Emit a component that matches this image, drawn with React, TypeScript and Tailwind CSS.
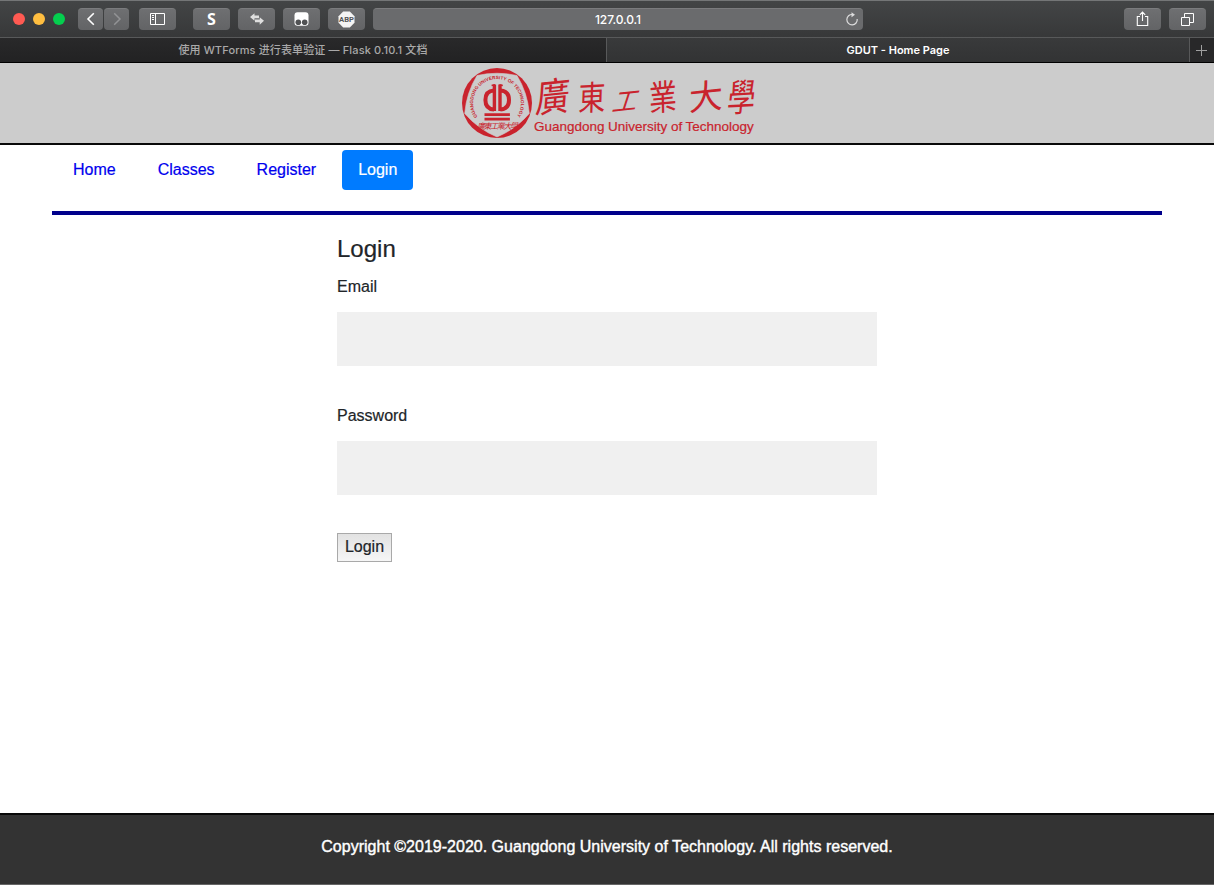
import type { ReactNode } from "react";

const toolButton =
  "flex h-[22px] shrink-0 items-center justify-center rounded-[4px] bg-linear-to-b from-[#6e6f71] to-[#636466] border-t border-[#7b7c7e] text-white";

function ToolButton({ className, children }: { className: string; children: ReactNode }) {
  return <button className={`${toolButton} ${className}`}>{children}</button>;
}

function Toolbar() {
  return (
    <div className="flex h-[37px] items-center border-t border-[#747677] bg-linear-to-b from-[#434546] to-[#373839] pl-[13px] pr-2 pb-px">
      <span className="size-3 rounded-full bg-[#ff5a52]" />
      <span className="ml-2 size-3 rounded-full bg-[#ffbe40]" />
      <span className="ml-2 size-3 rounded-full bg-[#04ce4e]" />
      <ToolButton className="ml-[13px] w-[25px]">
        <svg width="10" height="14" viewBox="0 0 10 14" fill="none" stroke="currentColor" strokeWidth="1.6">
          <path d="M7.8 1.2 2 7l5.8 5.8" />
        </svg>
      </ToolButton>
      <ToolButton className="ml-px w-[25px]">
        <svg width="10" height="14" viewBox="0 0 10 14" fill="none" stroke="#929395" strokeWidth="1.5">
          <path d="M2.2 1.2 8 7l-5.8 5.8" />
        </svg>
      </ToolButton>
      <ToolButton className="ml-2.5 w-[37px]">
        <svg width="15" height="12" viewBox="0 0 15 12" fill="none" stroke="currentColor">
          <path d="M.5.5h14v11H.5zM5.5.5v11M2 2.5h2M2 4.5h2M2 6.5h2" />
        </svg>
      </ToolButton>
      <ToolButton className="ml-[17px] w-[37px] font-['Open_Sans',sans-serif] text-[16px] font-bold leading-none">S</ToolButton>
      <ToolButton className="ml-2 w-[37px]">
        <svg width="14" height="12" viewBox="0 0 14 12" fill="#dfdfdf">
          <path d="M0 4 4.5.3v2.3H9v2.7H4.5v2.4zM14 7.8 9.7 4.3v2.3H5v2.7h4.7v2.4z" />
        </svg>
      </ToolButton>
      <ToolButton className="ml-2 w-[37px]">
        <svg width="15" height="14" viewBox="0 0 15 14">
          <rect x=".5" y=".3" width="14" height="13.4" rx="3" fill="white" />
          <circle cx="4.3" cy="10.2" r="2.8" fill="#515254" />
          <circle cx="10.7" cy="10.2" r="2.8" fill="#515254" />
        </svg>
      </ToolButton>
      <ToolButton className="ml-2 w-[37px]">
        <svg width="17" height="17" viewBox="0 0 17 17">
          <path d="M5.2.5h6.6l4.7 4.7v6.6l-4.7 4.7H5.2L.5 11.8V5.2z" fill="#f4f4f4" />
          <text x="8.5" y="11.2" textAnchor="middle" fontFamily="Roboto, sans-serif" fontSize="7.6" fontWeight="700" fill="#545557">ABP</text>
        </svg>
      </ToolButton>
      <div className="ml-2 flex h-[22px] w-[490px] shrink-0 items-center rounded-[4px] border-t border-[#7b7c7e] bg-[#6a6b6d] pr-1 text-white">
        <span className="grow pl-[18px] pt-px text-center font-['Inter',sans-serif] text-[12px] font-medium tracking-[-0.08px]">127.0.0.1</span>
        <svg width="14" height="15" viewBox="0 0 14 15" fill="none" stroke="#dcdcdd" strokeWidth="1.2">
          <path d="M7.5 2.5A5.2 5.2 0 1 0 12.2 7" />
          <path d="M6.5.2 10 2.7 6.5 5.2z" fill="#dcdcdd" stroke="none" />
        </svg>
      </div>
      <ToolButton className="ml-auto w-[37px]">
        <svg width="13" height="16" viewBox="0 0 13 16" fill="none" stroke="currentColor" strokeWidth="1.1">
          <path d="M4 5.5H1.3v9h10.4v-9H9M6.5 10V1.2M3.8 3.9l2.7-2.8 2.7 2.8" />
        </svg>
      </ToolButton>
      <ToolButton className="ml-2 w-[37px]">
        <svg width="13" height="13" viewBox="0 0 13 13" fill="none" stroke="currentColor">
          <path d="M.5 4.5h8v8h-8zM3.5 4.5v-4h9v9h-4" />
        </svg>
      </ToolButton>
    </div>
  );
}

function TabBar() {
  return (
    <div className="flex h-[26px] border-b border-t border-b-black border-t-[#58595a] font-['Inter','Noto_Sans_CJK_SC',sans-serif] text-[11px] leading-[24px]">
      <div className="w-[606px] bg-linear-to-b from-[#29292a] to-[#222223] text-center font-medium tracking-[0.13px] text-[#a9a9a9]">
        使用 WTForms 进行表单验证 — Flask 0.10.1 文档
      </div>
      <div className="w-[584px] border-x border-[#58595a] bg-linear-to-b from-[#393a3b] to-[#323334] text-center font-semibold text-white">
        GDUT - Home Page
      </div>
      <div className="flex grow items-center justify-center bg-[#282829] pr-0.5">
        <svg width="11" height="11" viewBox="0 0 11 11" stroke="#a0a0a0">
          <path d="M5.5 0v11M0 5.5h11" />
        </svg>
      </div>
    </div>
  );
}

function Seal() {
  return (
    <svg width="70" height="70" viewBox="0 0 70 70" fill="#c9232d">
      <defs>
        <path id="seal-arc" d="M16 49.5A23.9 23.9 0 1 1 54 49.5" />
      </defs>
      <circle cx="35" cy="35" r="35" />
      <path
        d="M15 7.5Q35 3 55 7.5Q65.6 24.8 67.3 45.5Q54 61 35 69Q16 61 2.7 45.5Q4.4 24.8 15 7.5Z"
        fill="#ccc"
        stroke="#ccc"
        strokeWidth="0.6"
        strokeLinejoin="round"
      />
      <text fontSize="4.6" fontFamily="Liberation Sans, Arial, sans-serif" fontWeight="700">
        <textPath href="#seal-arc" startOffset="1" textLength="103" lengthAdjust="spacingAndGlyphs">GUANGDONG UNIVERSITY OF TECHNOLOGY</textPath>
      </text>
      <g fill="none" stroke="#c9232d">
        <path d="M32.4 16.5v26.5M38 16.5v26.5" strokeWidth="3.4" />
        <path d="M29.6 17.5 33 16.8M40.8 17.5 37.4 16.8" strokeWidth="1.6" />
        <path d="M32 22.5Q23.4 23 23.4 32T32 41.5M38.4 22.5Q47 23 47 32T38.4 41.5" strokeWidth="4" />
      </g>
      <path d="M22.5 45.3h25.4v2.7H22.5zM22.5 49.8h25.4v2.6H22.5z" />
      <text x="35.5" y="61" textAnchor="middle" textLength="41" fontFamily="Noto Sans CJK TC, sans-serif" fontSize="8" fontStyle="italic">廣東工業大學</text>
    </svg>
  );
}

const characters = [
  { glyph: "廣", style: "w-[38px] text-[34px] -skew-x-12 -rotate-6 scale-y-115" },
  { glyph: "東", style: "w-[40px] text-[27px] -skew-x-6 -rotate-3 scale-y-125" },
  { glyph: "工", style: "w-[30px] text-[25px] -skew-x-[24deg] -rotate-6 translate-y-1" },
  { glyph: "業", style: "w-[42px] text-[28px] -skew-x-6 -rotate-6 scale-y-125" },
  { glyph: "大", style: "w-[44px] text-[34px] -skew-x-6 -rotate-6" },
  { glyph: "學", style: "w-[28px] text-[28px] -skew-x-12 -rotate-3 scale-y-135" },
];

function Banner() {
  return (
    <header className="flex h-[82px] border-b-2 border-[#090909] bg-[#ccc] pl-[462px] pt-[5px] text-[#c9232d]">
      <Seal />
      <div className="ml-0.5 flex w-[222px] flex-col font-['Liberation_Sans',Arial,sans-serif]">
        <div className="flex h-[50px] items-center pt-1 font-['Noto_Sans_CJK_TC',sans-serif] font-normal leading-none">
          {characters.map((c) => (
            <span key={c.glyph} className={`flex shrink-0 justify-center ${c.style}`}>{c.glyph}</span>
          ))}
        </div>
        <span className="whitespace-nowrap text-[13.5px] leading-[18px] tracking-[-0.02px] [-webkit-text-stroke:0.2px_#c9232d]">Guangdong University of Technology</span>
      </div>
    </header>
  );
}

function Nav() {
  return (
    <nav className="mx-[52px] flex h-[70px] items-start gap-2.5 border-b-4 border-[#00008b] pl-[5px] pt-[5px] text-[#0000ee] [-webkit-text-stroke:0.2px]">
      <a className="px-4 py-2">Home</a>
      <a className="px-4 py-2">Classes</a>
      <a className="px-4 py-2">Register</a>
      <a className="rounded bg-[#007bff] px-4 py-2 text-white">Login</a>
    </nav>
  );
}

function Field({ label, type }: { label: string; type: string }) {
  return (
    <label className="mb-[38px] block">
      <span className="block">{label}</span>
      <input type={type} className="mt-[13px] block h-[54px] w-full bg-[#f0f0f0] px-4 outline-none" />
    </label>
  );
}

export default function App() {
  return (
    <div className="flex h-[885px] w-[1214px] flex-col overflow-hidden bg-white font-['Liberation_Sans',Arial,sans-serif] text-base text-[#212529]">
      <Toolbar />
      <TabBar />
      <Banner />
      <Nav />
      <form className="mx-auto w-[540px] grow pt-[19px] [-webkit-text-stroke:0.2px]">
        <h1 className="mb-2 text-2xl leading-[29px]">Login</h1>
        <div className="pt-1">
          <Field label="Email" type="email" />
          <Field label="Password" type="password" />
        </div>
        <button type="button" className="h-[29px] w-[55px] border border-[#a9a9a9] bg-linear-to-b from-[#e2e2e2] to-[#f6f6f6] pb-0.5 leading-6">
          Login
        </button>
      </form>
      <footer className="h-[72px] border-b border-t-2 border-b-[#666] border-t-[#090909] bg-[#333] pt-5 text-center tracking-[0.01px] text-white [-webkit-text-stroke:0.4px_white]">
        Copyright ©2019-2020. Guangdong University of Technology. All rights reserved.
      </footer>
    </div>
  );
}
